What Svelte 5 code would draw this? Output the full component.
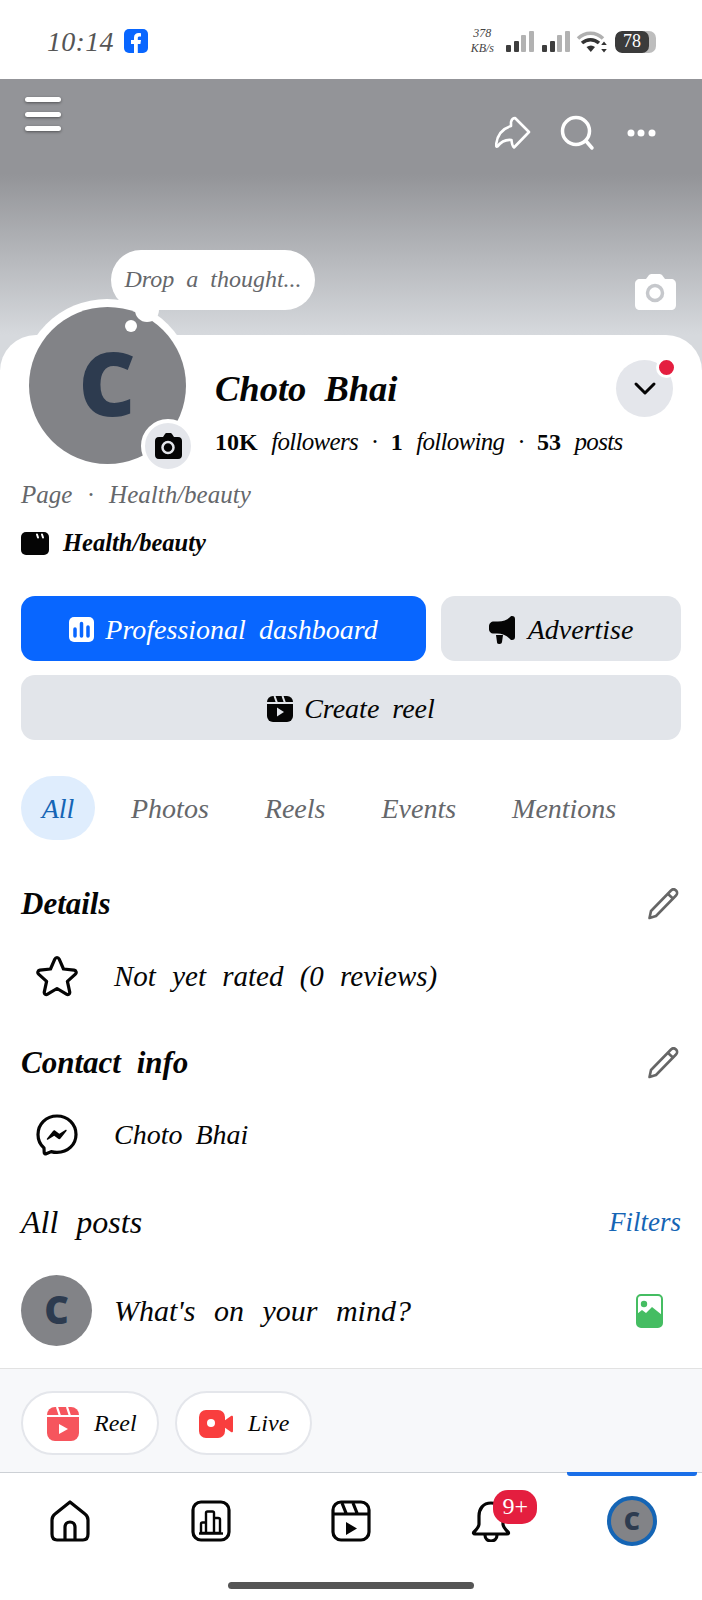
<script>
  const tabs = ['Photos', 'Reels', 'Events', 'Mentions'];
  const bars = [[0, 45], [8, 41], [15, 35], [23, 31]];
</script>

<div class="page">
  <header class="status">
    <span class="time">10:14</span>
    <svg class="fb" viewBox="0 0 24 24" width="24" height="24" aria-hidden="true">
      <rect width="24" height="24" rx="5" fill="#0866ff" />
      <path d="M10 24v-9H7v-4h3V8.500C10 5.500 12 4 14.500 4c1.200 0 2.200.1 2.500.2V7.500h-1.800C14 7.500 13.800 8.300 13.800 9.200V11h3.200l-.6 4h-2.600v9z" fill="#fff" />
    </svg>
    <span class="spacer"></span>
    <span class="speed"><span>378</span><span>KB/s</span></span>
    <svg class="signal" viewBox="0 0 102 22" width="102" height="22" aria-hidden="true">
      {#each [0, 36] as off}
        {#each bars as b, i}
          <rect x={off + b[0]} y={b[1] - 31} width="5" height={52 - b[1]} rx="1" fill={i < 2 ? '#3e3e3e' : '#b2b2b2'} />
        {/each}
      {/each}
      <path d="M72 7.500C79 .5 90 .5 97 7.500" fill="none" stroke="#b0b0b0" stroke-width="3.500" />
      <path d="M76 12c5-4.500 12-4.500 17 0" fill="none" stroke="#333" stroke-width="3.500" />
      <path d="M80.500 16c3-2 6-2 8.500 0l-4.200 5z" fill="#333" />
      <path d="M98 10.500l2.800 3.500h-5.600zM98 21.500l-2.800-3.500h5.600z" fill="#333" />
    </svg>
    <span class="battery"><span class="cell">78</span></span>
  </header>

  <section class="cover">
    <div class="cover-top">
      <div class="burger"><i></i><i></i><i></i></div>
      <div class="cover-actions">
        <svg class="share" viewBox="0 0 36 34" width="36" height="34" fill="none" stroke="#fff" stroke-width="2.600" stroke-linejoin="round" aria-hidden="true">
          <path d="M20 2 L34 16 L19 31.500 Q17 30 16.500 24 Q8 23 2.500 30.500 Q1 31.500 1.200 28 Q3 14 16 10 L16 6 Q17 2 20 2Z" />
        </svg>
        <svg class="search" viewBox="0 0 36 36" width="36" height="36" fill="none" stroke="#fff" stroke-width="3.500" stroke-linecap="round" aria-hidden="true">
          <circle cx="17" cy="16" r="13.500" />
          <path d="M27 26l6 7" />
        </svg>
        <svg viewBox="0 0 30 8" width="30" height="8" fill="#fff" aria-hidden="true">
          <circle cx="4" cy="4" r="3.500" /><circle cx="14" cy="4" r="3.500" /><circle cx="25" cy="4" r="3.500" />
        </svg>
      </div>
    </div>
    <div class="bubble">Drop a thought...</div>
    <svg class="cover-cam" viewBox="0 0 42 36" width="42" height="36" aria-hidden="true">
      <path d="M6 5h6l3-4c1-1 2-1 3-1h7c1 0 2 0 3 1l3 4h6c3 0 5 2 5 5v21c0 3-2 5-5 5H6c-3 0-5-2-5-5V10c0-3 2-5 5-5z" fill="#fff" />
      <circle cx="21" cy="19" r="7.500" fill="none" stroke="#c6c8cc" stroke-width="3.500" />
    </svg>
  </section>

  <main class="sheet">
    <div class="profile">
      <div class="avatar-wrap">
        <div class="avatar">C</div>
        <span class="tail"></span>
        <span class="tail-dot"></span>
        <span class="cam-badge">
          <svg viewBox="0 0 28 26" width="28" height="26" aria-hidden="true">
            <path d="M5 4h4l2-3c.5-.7 1-1 2-1h3c1 0 1.500.3 2 1l2 3h4c3 0 4 2 4 4v14c0 2-1 4-4 4H5c-3 0-4-2-4-4V8c0-2 1-4 4-4z" fill="#050505" />
            <circle cx="14" cy="14.500" r="5.500" fill="none" stroke="#e4e6eb" stroke-width="2.500" />
          </svg>
        </span>
      </div>
      <div class="info">
        <div class="name-row">
          <h1>Choto Bhai</h1>
          <button class="chevron">
            <svg viewBox="0 0 24 16" width="24" height="16" fill="none" stroke="#050505" stroke-width="3" stroke-linecap="round" stroke-linejoin="round" aria-hidden="true">
              <path d="M3 3l9 9 9-9" />
            </svg>
            <span class="dot"></span>
          </button>
        </div>
        <p class="stats"><b>10K</b> followers · <b>1</b> following · <b>53</b> posts</p>
      </div>
    </div>

    <div class="content">
      <p class="meta">Page · Health/beauty</p>
      <div class="category">
        <svg viewBox="0 0 28 24" width="28" height="24" aria-hidden="true">
          <rect y="1" width="28" height="23" rx="5" fill="#050505" />
          <path d="M16 3.500l1 3M21 3.500l1 3" stroke="#fff" stroke-width="2" stroke-linecap="round" />
        </svg>
        <strong>Health/beauty</strong>
      </div>

      <div class="actions">
        <button class="btn primary">
          <svg viewBox="0 0 25 25" width="25" height="25" aria-hidden="true">
            <rect width="25" height="25" rx="5" fill="#fff" />
            <path d="M6 12v7M12.500 6.500V19M19 10v9" stroke="#0866ff" stroke-width="3.500" stroke-linecap="round" />
          </svg>
          Professional dashboard
        </button>
        <button class="btn ad">
          <svg viewBox="0 0 28 28" width="28" height="28" fill="#050505" aria-hidden="true">
            <path d="M23 0c2 0 3 1 3 3v18c0 2-1 3-3 3-1 0-1.500-.5-2.500-1.500C17 19 13 17.500 8 17.500H4c-2 0-4-2-4-4v-3c0-3 2-5 5-5h4c5 0 9-1.500 11.500-4C21.500.5 22 0 23 0z" />
            <path d="M7 19h7l-1 7c-.2 1.300-1 2-2.500 2H10C8.500 28 8 27 8 26z" />
          </svg>
          Advertise
        </button>
      </div>
      <button class="btn reel">
        <svg viewBox="0 0 26 26" width="26" height="26" aria-hidden="true">
          <rect width="26" height="26" rx="6" fill="#050505" />
          <path d="M0 7h26M7.500 0l2.500 7M15.500 0l2.500 7" stroke="#e2e5ea" stroke-width="2" fill="none" />
          <path d="M10 11.500l7 4.500-7 4.500z" fill="#e2e5ea" />
        </svg>
        Create reel
      </button>

      <nav class="tabs">
        <span class="tab active">All</span>
        {#each tabs as t}
          <span class="tab">{t}</span>
        {/each}
      </nav>

      <div class="sec-head first">
        <h2>Details</h2>
        <svg class="pencil" viewBox="0 0 32 32" width="32" height="32" fill="none" stroke="#666" stroke-width="2.600" stroke-linejoin="round" aria-hidden="true">
          <path d="M24 2.500c1.500-1.500 3.500-1.500 5 0s1.500 3.500 0 5L9 28l-6.500 2 1.500-7z" />
          <path d="M21 6l5.500 5" />
        </svg>
      </div>
      <div class="row rated">
        <svg viewBox="0 0 42 42" width="42" height="42" fill="none" stroke="#050505" stroke-width="3.200" stroke-linejoin="round" aria-hidden="true">
          <path d="M21 2.500c1 0 1.700.6 2.200 1.700l4.300 9.800 10.600 1.200c2 .3 2.800 2.500 1.300 3.900l-8 7.300 2.300 10.500c.4 2-1.500 3.400-3.300 2.300L21 33.500l-9.400 5.700c-1.800 1.100-3.700-.3-3.300-2.300l2.300-10.500-8-7.300c-1.500-1.400-.7-3.600 1.300-3.900l10.600-1.200 4.300-9.800c.5-1.100 1.200-1.700 2.200-1.700z" />
        </svg>
        <span>Not yet rated (0 reviews)</span>
      </div>

      <div class="sec-head">
        <h2>Contact info</h2>
        <svg class="pencil" viewBox="0 0 32 32" width="32" height="32" fill="none" stroke="#666" stroke-width="2.600" stroke-linejoin="round" aria-hidden="true">
          <path d="M24 2.500c1.500-1.500 3.500-1.500 5 0s1.500 3.500 0 5L9 28l-6.500 2 1.500-7z" />
          <path d="M21 6l5.500 5" />
        </svg>
      </div>
      <div class="row">
        <svg viewBox="0 0 42 42" width="42" height="42" fill="none" aria-hidden="true">
          <path d="M21 2C10 2 2 10 2 20.500c0 5.500 2 10 6 13.500l.2 4.500c0 1 1 1.700 2 1.300l5-2.200c1.800.5 3.700.8 5.800.8 11 0 19-8 19-18S32 2 21 2z" stroke="#050505" stroke-width="3.200" stroke-linejoin="round" />
          <path d="M11 24.500l6-7.500c.7-.8 1.500-.9 2.300-.3l4 3 6-3.700c1-.6 1.800.3 1.200 1.100l-6 7.400c-.7.800-1.500.9-2.300.3l-4-3-6 3.800c-1 .6-1.800-.3-1.200-1.100z" fill="#050505" />
        </svg>
        <span>Choto Bhai</span>
      </div>

      <div class="sec-head">
        <h3>All posts</h3>
        <span class="filters">Filters</span>
      </div>
      <div class="composer">
        <div class="avatar small">C</div>
        <span>What's on your mind?</span>
        <svg class="photo" viewBox="0 0 27 34" width="27" height="34" aria-hidden="true">
          <rect x="1" y="1" width="25" height="32" rx="4" fill="#fff" stroke="#45bd62" stroke-width="2" />
          <path d="M1 20l5-4 4 3 6-6 10 8v8c0 2.500-1.500 4-4 4H5c-2.500 0-4-1.500-4-4z" fill="#45bd62" />
          <circle cx="8" cy="10" r="3.200" fill="#45bd62" />
        </svg>
      </div>
    </div>

    <div class="tray">
      <div class="pill reel-pill">
        <svg viewBox="0 0 32 34" width="32" height="34" aria-hidden="true">
          <rect width="32" height="34" rx="8" fill="#f6555d" />
          <path d="M0 9h32M10 0l3 9M20 0l3 9" stroke="#fff" stroke-width="2.200" fill="none" />
          <path d="M12 17l9 5-9 5z" fill="#fff" />
        </svg>
        Reel
      </div>
      <div class="pill live-pill">
        <svg viewBox="0 0 34 28" width="34" height="28" aria-hidden="true">
          <rect width="26" height="28" rx="7" fill="#f93e3e" />
          <path d="M25 11l7-5c1-.6 2 0 2 1v14c0 1-1 1.600-2 1l-7-5z" fill="#f93e3e" />
          <circle cx="12" cy="13" r="4" fill="#fff" />
        </svg>
        Live
      </div>
    </div>

    <nav class="bottom">
      <div class="item">
        <svg viewBox="0 0 40 42" width="40" height="42" fill="none" stroke="#050505" stroke-width="3.200" stroke-linejoin="round" aria-hidden="true">
          <path d="M20 2L5 14c-2 1.500-3 3-3 6v14c0 4 2 6 5 6h26c3 0 5-2 5-6V20c0-3-1-4.500-3-6z" />
          <path d="M15 40V27c0-3 2-5 5-5s5 2 5 5v13" />
        </svg>
      </div>
      <div class="item">
        <svg viewBox="0 0 40 42" width="40" height="42" fill="none" stroke="#050505" stroke-width="3.200" stroke-linejoin="round" aria-hidden="true">
          <rect x="2" y="2" width="36" height="38" rx="8" />
          <path d="M10 33V24c0-1 .5-1.500 1.500-1.500h3.500V33zM15 33V13c0-1 .5-1.500 1.500-1.500h5c1 0 1.500.5 1.500 1.500v20zM23 33V18h4c1 0 2 .5 2 1.500V33z" stroke-width="2.400" />
          <path d="M8 33.500h24" stroke-width="2.400" />
        </svg>
      </div>
      <div class="item">
        <svg viewBox="0 0 40 42" width="40" height="42" fill="none" stroke="#050505" stroke-width="3.200" stroke-linejoin="round" aria-hidden="true">
          <rect x="2" y="2" width="36" height="38" rx="8" />
          <path d="M2 14h36M11 3l4 10M22 3l4 10" />
          <path d="M15 22l11 6.500-11 6.500z" fill="#050505" stroke="none" />
        </svg>
      </div>
      <div class="item">
        <svg viewBox="0 0 40 42" width="40" height="42" fill="none" stroke="#050505" stroke-width="3.200" stroke-linejoin="round" aria-hidden="true">
          <path d="M20 3C12 3 8 9 8 16v8c0 3-2 5-5 8-1 1-.5 2 1 2h32c1.500 0 2-1 1-2-3-3-5-5-5-8v-8c0-7-4-13-12-13z" />
          <path d="M14 35c0 4 3 6 6 6s6-2 6-6" />
        </svg>
        <span class="badge">9+</span>
      </div>
      <div class="item">
        <span class="indicator"></span>
        <div class="avatar nav-av">C</div>
      </div>
    </nav>
    <div class="home-bar"></div>
  </main>
</div>

<style>
  :global(body) {
    margin: 0;
    background: #fff;
  }
  .page {
    width: 702px;
    height: 1600px;
    overflow: hidden;
    font-family: "Liberation Serif", "Times New Roman", serif;
    font-style: italic;
    color: #050505;
    word-spacing: 6px;
  }
  svg {
    display: block;
    flex: none;
  }
  p, h1, h2, h3 {
    margin: 0;
  }
  button {
    font: inherit;
    color: inherit;
    border: 0;
    padding: 0;
    word-spacing: inherit;
  }

  .status {
    height: 79px;
    display: flex;
    align-items: center;
    padding: 2px 46px 0 47px;
    box-sizing: border-box;
  }
  .time {
    font-size: 28px;
    color: #555;
    letter-spacing: 0.3px;
    margin-top: 2px;
  }
  .fb {
    margin-left: 10px;
  }
  .spacer {
    flex: 1;
  }
  .speed {
    display: flex;
    flex-direction: column;
    align-items: center;
    font-size: 12px;
    line-height: 15px;
    color: #444;
    margin-right: 12px;
  }
  .signal {
    margin-top: 2px;
  }
  .battery {
    margin-left: 7px;
    width: 41px;
    height: 22px;
    border-radius: 7px;
    background: #bdbdbd;
    margin-top: 2px;
    overflow: hidden;
  }
  .cell {
    display: block;
    width: 34px;
    height: 22px;
    background: #3b3b3b;
    border-radius: 7px;
    color: #fff;
    text-align: center;
    font-size: 18px;
    line-height: 21px;
    font-style: normal;
  }

  .cover {
    position: relative;
    height: 291px;
    background: linear-gradient(#939498 0, #939498 95px, #d6d9dd 256px);
  }
  .cover-top {
    display: flex;
    justify-content: space-between;
    padding: 18px 45px 0 25px;
  }
  .burger {
    display: flex;
    flex-direction: column;
    gap: 9.500px;
  }
  .burger i {
    display: block;
    width: 36px;
    height: 5px;
    border-radius: 3px;
    background: #fff;
    box-shadow: 0 1px 3px rgba(0, 0, 0, 0.45);
  }
  .cover-actions {
    display: flex;
    align-items: center;
    gap: 32px;
    margin-top: 18px;
  }
  .share {
    margin-right: -4px;
  }
  .bubble {
    position: absolute;
    left: 111px;
    top: 171px;
    width: 204px;
    height: 60px;
    border-radius: 30px;
    background: #fff;
    text-align: center;
    line-height: 58px;
    font-size: 24px;
    color: #65676b;
    box-sizing: border-box;
  }
  .cover-cam {
    position: absolute;
    left: 634px;
    top: 195px;
  }

  .sheet {
    position: relative;
    margin-top: -35px;
    background: #fff;
    border-radius: 36px 36px 0 0;
  }
  .profile {
    display: flex;
    gap: 22px;
    padding: 0 29px 0 21px;
  }
  .avatar-wrap {
    position: relative;
    flex: none;
    width: 172px;
    height: 172px;
    margin-top: -36px;
    border-radius: 50%;
    background: #fff;
    display: flex;
    align-items: center;
    justify-content: center;
  }
  .avatar {
    width: 157px;
    height: 157px;
    border-radius: 50%;
    background: #828387;
    color: #2d3b4f;
    font-family: "Open Sans", sans-serif;
    font-style: normal;
    font-weight: 800;
    font-size: 88px;
    line-height: 150px;
    text-align: center;
  }
  .tail {
    position: absolute;
    left: 114px;
    top: -1px;
    width: 24px;
    height: 24px;
    border-radius: 50%;
    background: #fff;
  }
  .tail-dot {
    position: absolute;
    left: 104px;
    top: 21px;
    width: 12px;
    height: 12px;
    border-radius: 50%;
    background: #fff;
  }
  .cam-badge {
    position: absolute;
    left: 120px;
    top: 120px;
    width: 46px;
    height: 46px;
    border-radius: 50%;
    background: #e4e6eb;
    border: 4px solid #fff;
    display: flex;
    align-items: center;
    justify-content: center;
  }
  .info {
    flex: 1;
    padding-top: 25px;
  }
  .name-row {
    height: 57px;
    display: flex;
    align-items: center;
    justify-content: space-between;
  }
  h1 {
    font-size: 36.500px;
    font-weight: 700;
    line-height: 44px;
    word-spacing: 9px;
  }
  .chevron {
    position: relative;
    width: 57px;
    height: 57px;
    border-radius: 50%;
    background: #e4e6eb;
    display: flex;
    align-items: center;
    justify-content: center;
  }
  .dot {
    position: absolute;
    right: -4px;
    top: -3px;
    width: 15px;
    height: 15px;
    border-radius: 50%;
    background: #e41e3f;
    border: 3px solid #fff;
  }
  .stats {
    margin-top: 7px;
    font-size: 25px;
    line-height: 36px;
    white-space: nowrap;
    letter-spacing: -0.7px;
    word-spacing: 8px;
  }
  .stats b {
    font-style: normal;
    font-weight: 700;
    font-size: 24px;
    letter-spacing: 0;
  }

  .content {
    padding: 0 21px;
  }
  .meta {
    margin-top: 7px;
    font-size: 25px;
    line-height: 34px;
    color: #65676b;
    word-spacing: 9px;
  }
  .category {
    margin-top: 16px;
    height: 30px;
    display: flex;
    align-items: center;
    gap: 14px;
    font-size: 24.500px;
  }
  .actions {
    display: flex;
    gap: 15px;
    margin-top: 38px;
  }
  .btn {
    height: 65px;
    border-radius: 14px;
    display: flex;
    align-items: center;
    justify-content: center;
    gap: 11px;
    font-size: 28px;
    background: #e2e5ea;
    padding-top: 2px;
    box-sizing: border-box;
  }
  .primary {
    width: 405px;
    background: #0866ff;
    color: #fff;
  }
  .ad {
    flex: 1;
  }
  .reel {
    width: 100%;
    margin-top: 14px;
  }
  .tabs {
    display: flex;
    align-items: center;
    margin-top: 36px;
    height: 64px;
    font-size: 28px;
    color: #65676b;
    gap: 56px;
  }
  .tab {
    padding-top: 1px;
  }
  .tab.active {
    width: 74px;
    height: 63px;
    margin-right: -20px;
    border-radius: 32px;
    background: #dfedfd;
    color: #1565b5;
    text-align: center;
    line-height: 64px;
  }
  .sec-head {
    display: flex;
    align-items: center;
    justify-content: space-between;
    height: 36px;
    margin-top: 48px;
  }
  .sec-head.first {
    margin-top: 46px;
  }
  h2 {
    font-size: 31px;
    font-weight: 700;
    word-spacing: 8px;
  }
  h3 {
    font-size: 32px;
    font-weight: 400;
    word-spacing: 10px;
  }
  .pencil {
    margin-right: 2px;
  }
  .filters {
    font-size: 27px;
    color: #1565b5;
  }
  .row {
    display: flex;
    align-items: center;
    gap: 36px;
    height: 42px;
    margin-top: 33px;
    padding-left: 15px;
    font-size: 28px;
  }
  .row.rated {
    font-size: 29px;
    word-spacing: 9px;
  }
  .composer {
    display: flex;
    align-items: center;
    height: 71px;
    margin-top: 35px;
    font-size: 30px;
    word-spacing: 11px;
  }
  .composer span {
    margin-left: 22px;
    flex: 1;
  }
  .avatar.small {
    width: 71px;
    height: 71px;
    font-size: 38px;
    line-height: 68px;
    flex: none;
  }
  .photo {
    margin-right: 18px;
  }
  .tray {
    display: flex;
    gap: 16px;
    margin-top: 22px;
    padding: 22px 21px 17px;
    height: 64px;
    background: #f7f8fa;
    border-top: 1px solid #e2e2e2;
  }
  .pill {
    height: 64px;
    box-sizing: border-box;
    border: 2px solid #e4e6eb;
    border-radius: 32px;
    background: #fff;
    display: flex;
    align-items: center;
    font-size: 24px;
    gap: 15px;
    padding-left: 24px;
    padding-top: 1px;
  }
  .reel-pill {
    width: 138px;
  }
  .live-pill {
    width: 137px;
    padding-left: 22px;
  }
  .bottom {
    display: grid;
    grid-template-columns: repeat(5, 1fr);
    border-top: 1px solid #ccd0d5;
  }
  .item {
    position: relative;
    padding-top: 27px;
    height: 42px;
    display: flex;
    justify-content: center;
  }
  .badge {
    position: absolute;
    left: 72px;
    top: 17px;
    width: 44px;
    height: 34px;
    border-radius: 15px;
    background: #e41e3f;
    color: #fff;
    font-size: 24px;
    font-style: normal;
    line-height: 32px;
    text-align: center;
  }
  .indicator {
    position: absolute;
    top: -1px;
    left: 5px;
    width: 130px;
    height: 4px;
    border-radius: 0 0 3px 3px;
    background: #1a6fe8;
  }
  .avatar.nav-av {
    width: 50px;
    height: 50px;
    box-sizing: border-box;
    border: 4px solid #1565b5;
    margin-top: -4px;
    font-size: 25px;
    line-height: 40px;
  }
  .home-bar {
    width: 246px;
    height: 7px;
    margin: 40px auto 0;
    border-radius: 4px;
    background: #555;
  }
</style>
